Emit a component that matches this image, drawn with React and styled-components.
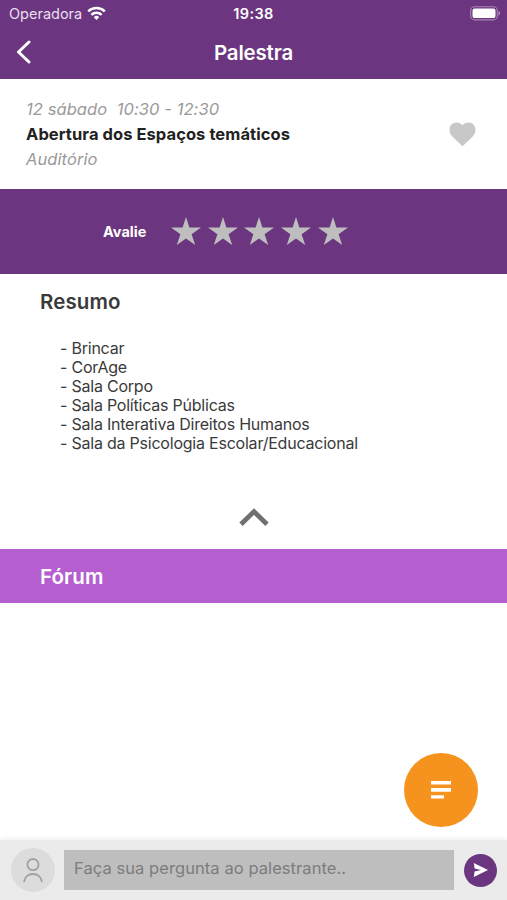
import React from 'react'
import styled, { createGlobalStyle } from 'styled-components'

const color = {
  primary: '#6b367f',
  secondary: '#b45ecf',
  accent: '#f6921e',
  dark: '#222',
  text: '#3a3a3a',
  muted: '#999',
  light: '#c8c8c8',
}

const GlobalStyle = createGlobalStyle`
  * {
    box-sizing: border-box;
  }

  body {
    margin: 0;
    background: #fff;
    font-family: Inter, "Liberation Sans", sans-serif;
  }
`

const Screen = styled.div`
  position: relative;
  display: flex;
  flex-direction: column;
  height: 100vh;
  min-height: 900px;
  overflow: hidden;
`

const Header = styled.header`
  height: 79px;
  flex-shrink: 0;
  background: ${color.primary};
  color: #fff;
`

const Bar = styled.div`
  display: grid;
  grid-template-columns: 1fr auto 1fr;
  align-items: center;
  height: ${p => p.height}px;
  padding: ${p => p.pad};
`

const Carrier = styled.div`
  display: flex;
  align-items: center;
  gap: 5px;
  padding-left: 3px;
  font-size: 14.5px;
  line-height: 18px;
  color: #eadff0;
`

const Clock = styled.div`
  font-size: 14.5px;
  font-weight: 600;
  line-height: 18px;
  letter-spacing: 0.4px;
`

const Right = styled.div`
  display: flex;
  justify-content: flex-end;
`

const IconButton = styled.button`
  display: flex;
  justify-self: start;
  padding: 0;
  border: 0;
  background: none;
`

const ScreenTitle = styled.h1`
  margin: 0;
  padding-top: 1px;
  font-size: 20.5px;
  font-weight: 600;
  line-height: 26px;
  letter-spacing: -0.2px;
`

const Session = styled.section`
  display: flex;
  align-items: center;
  justify-content: space-between;
  flex-shrink: 0;
  height: 110px;
  padding: 0 31px 0 26px;
`

const SessionInfo = styled.div`
  line-height: 25px;
`

const Meta = styled.div`
  font-size: 16.5px;
  font-style: italic;
  letter-spacing: 0.08px;
  color: ${color.muted};
  white-space: pre;
`

const SessionTitle = styled.div`
  font-size: 16.5px;
  font-weight: 700;
  letter-spacing: 0.07px;
  color: ${color.dark};
`

const Rating = styled.section`
  display: flex;
  align-items: center;
  flex-shrink: 0;
  height: 85px;
  padding-left: 103px;
  background: ${color.primary};
`

const RatingLabel = styled.span`
  width: 68px;
  font-size: 14.5px;
  font-weight: 700;
  color: #fff;
`

const Stars = styled.div`
  display: flex;
  gap: 6.7px;
  padding-bottom: 1px;
`

const Summary = styled.section`
  display: flex;
  flex-direction: column;
  flex-shrink: 0;
  height: 275px;
  padding: 15px 40px 0;
`

const Heading = styled.h2`
  margin: 0;
  font-size: 20.5px;
  font-weight: 600;
  line-height: 26px;
  letter-spacing: 0.1px;
  color: ${p => p.tone};
`

const Topics = styled.ul`
  margin: 24px 0 0;
  padding: 0 0 0 20px;
  list-style: none;
  font-size: 16px;
  line-height: 18.9px;
  letter-spacing: -0.22px;
  color: ${color.text};
`

const Collapse = styled(IconButton)`
  align-self: center;
  margin-top: auto;
  margin-bottom: 22px;
`

const Forum = styled.section`
  display: flex;
  align-items: center;
  flex-shrink: 0;
  height: 54px;
  padding: 2px 40px 0;
  background: ${color.secondary};
`

const Fab = styled.button`
  position: absolute;
  right: 29px;
  bottom: 73px;
  display: flex;
  align-items: center;
  justify-content: center;
  width: 74px;
  height: 74px;
  padding: 0;
  border: 0;
  border-radius: 50%;
  background: ${color.accent};
`

const Composer = styled.footer`
  display: flex;
  align-items: center;
  flex-shrink: 0;
  height: 60px;
  margin-top: auto;
  padding: 0 10px 0 11px;
  background: #ebebeb;
  box-shadow: 0 -1px 5px rgba(0, 0, 0, 0.08);
`

const Avatar = styled.div`
  display: flex;
  align-items: center;
  justify-content: center;
  width: 44px;
  height: 44px;
  margin-right: 9px;
  border-radius: 50%;
  background: #dcdcdc;
`

const Question = styled.input`
  flex: 1;
  min-width: 0;
  height: 40px;
  margin-right: 10px;
  padding: 0 10px 5px;
  border: 0;
  border-radius: 0;
  background: #bebebe;
  font-family: inherit;
  font-size: 16.5px;
  letter-spacing: 0.07px;

  &::placeholder {
    color: #7c7c7c;
    opacity: 1;
  }
`

const Send = styled.button`
  display: flex;
  align-items: center;
  justify-content: center;
  width: 33px;
  height: 33px;
  padding: 0;
  border: 0;
  border-radius: 50%;
  background: ${color.primary};
`

const WifiIcon = () => (
  <svg width='19' height='15' viewBox='0 0 19 15' fill='#fff'>
    <path d='M9.5 14 6.8 11.2a3.8 3.8 0 0 1 5.4 0z' />
    <g fill='none' stroke='#fff' strokeWidth='2.5'>
      <path d='M4.4 8.9a7.2 7.2 0 0 1 10.2 0' />
      <path d='M1.2 5.4a11.9 11.9 0 0 1 16.6 0' />
    </g>
  </svg>
)

const BatteryIcon = () => (
  <svg width='31' height='15' viewBox='0 0 31 15'>
    <rect x='.7' y='.7' width='26.6' height='13.2' rx='4' fill='none' stroke='#fff' strokeOpacity='.4' strokeWidth='1.1' />
    <rect x='2.5' y='2.5' width='23' height='9.6' rx='2.2' fill='#fff' />
    <path d='M28.6 5v4.6c1.9-.7 1.9-3.9 0-4.6z' fill='#fff' fillOpacity='.5' />
  </svg>
)

const BackIcon = () => (
  <svg width='15' height='24' viewBox='0 0 15 24' fill='none' stroke='#fff' strokeWidth='3' strokeLinecap='round' strokeLinejoin='round'>
    <path d='M13 2 2.5 12 13 22' />
  </svg>
)

const HeartIcon = () => (
  <svg width='27' height='25' viewBox='0 0 27 25' fill={color.light}>
    <path d='M13.5 24.200 4 15.200C1.500 12.800.5 10.500.5 7.700.5 3.600 3.500.5 7.500.5c2.400 0 4.600 1 6 2.700C14.900 1.500 17.100.5 19.500.5c4 0 7 3.100 7 7.200 0 2.800-1 5.100-3.500 7.500z' />
  </svg>
)

const StarIcon = () => (
  <svg width='30' height='28' viewBox='0 0 30 28' fill='#bebebe'>
    <path d='m15 0 3.4 10.6H30l-9.4 6.7L24.2 28 15 21.4 5.8 28l3.6-10.7L0 10.6h11.6z' />
  </svg>
)

const ChevronUpIcon = () => (
  <svg width='30' height='20' viewBox='0 0 30 20' fill='none' stroke='#707070' strokeWidth='4.8'>
    <path d='M2 17.2 15 4.6l13 12.6' />
  </svg>
)

const NotesIcon = () => (
  <svg width='20' height='18' viewBox='0 0 20 18' fill='#fff'>
    <path d='M0 0h20v3.6H0zM0 7.1h20v3.6H0zM0 14.2h13v3.3H0z' />
  </svg>
)

const PersonIcon = () => (
  <svg width='20' height='25' viewBox='0 0 20 25' fill='none' stroke='#a0a0a0' strokeWidth='1.8'>
    <circle cx='10' cy='6.6' r='5.6' />
    <path d='M1 24.2c.6-5.2 4.3-8.2 9-8.2s8.4 3 9 8.2' />
  </svg>
)

const SendIcon = () => (
  <svg width='15' height='14' viewBox='0 0 15 14' fill='#fff'>
    <path d='M.8 0 15 7 .8 14l.8-5.4L8 7 1.6 5.400z' />
  </svg>
)

const topics = [
  'Brincar',
  'CorAge',
  'Sala Corpo',
  'Sala Políticas Públicas',
  'Sala Interativa Direitos Humanos',
  'Sala da Psicologia Escolar/Educacional',
]

export default () => (
  <Screen>
    <GlobalStyle />
    <Header>
      <Bar height={27} pad='0 6px'>
        <Carrier>Operadora <WifiIcon /></Carrier>
        <Clock>19:38</Clock>
        <Right><BatteryIcon /></Right>
      </Bar>
      <Bar height={50} pad='0 16px'>
        <IconButton aria-label='Voltar'><BackIcon /></IconButton>
        <ScreenTitle>Palestra</ScreenTitle>
      </Bar>
    </Header>
    <Session>
      <SessionInfo>
        <Meta>{'12 sábado  10:30 - 12:30'}</Meta>
        <SessionTitle>Abertura dos Espaços temáticos</SessionTitle>
        <Meta>Auditório</Meta>
      </SessionInfo>
      <IconButton aria-label='Favoritar'><HeartIcon /></IconButton>
    </Session>
    <Rating>
      <RatingLabel>Avalie</RatingLabel>
      <Stars>
        {[1, 2, 3, 4, 5].map(n => <StarIcon key={n} />)}
      </Stars>
    </Rating>
    <Summary>
      <Heading tone={color.text}>Resumo</Heading>
      <Topics>
        {topics.map(topic => <li key={topic}>- {topic}</li>)}
      </Topics>
      <Collapse aria-label='Recolher'><ChevronUpIcon /></Collapse>
    </Summary>
    <Forum>
      <Heading tone='#fff'>Fórum</Heading>
    </Forum>
    <Composer>
      <Avatar><PersonIcon /></Avatar>
      <Question placeholder='Faça sua pergunta ao palestrante..' />
      <Send aria-label='Enviar'><SendIcon /></Send>
    </Composer>
    <Fab aria-label='Comentários'><NotesIcon /></Fab>
  </Screen>
)
